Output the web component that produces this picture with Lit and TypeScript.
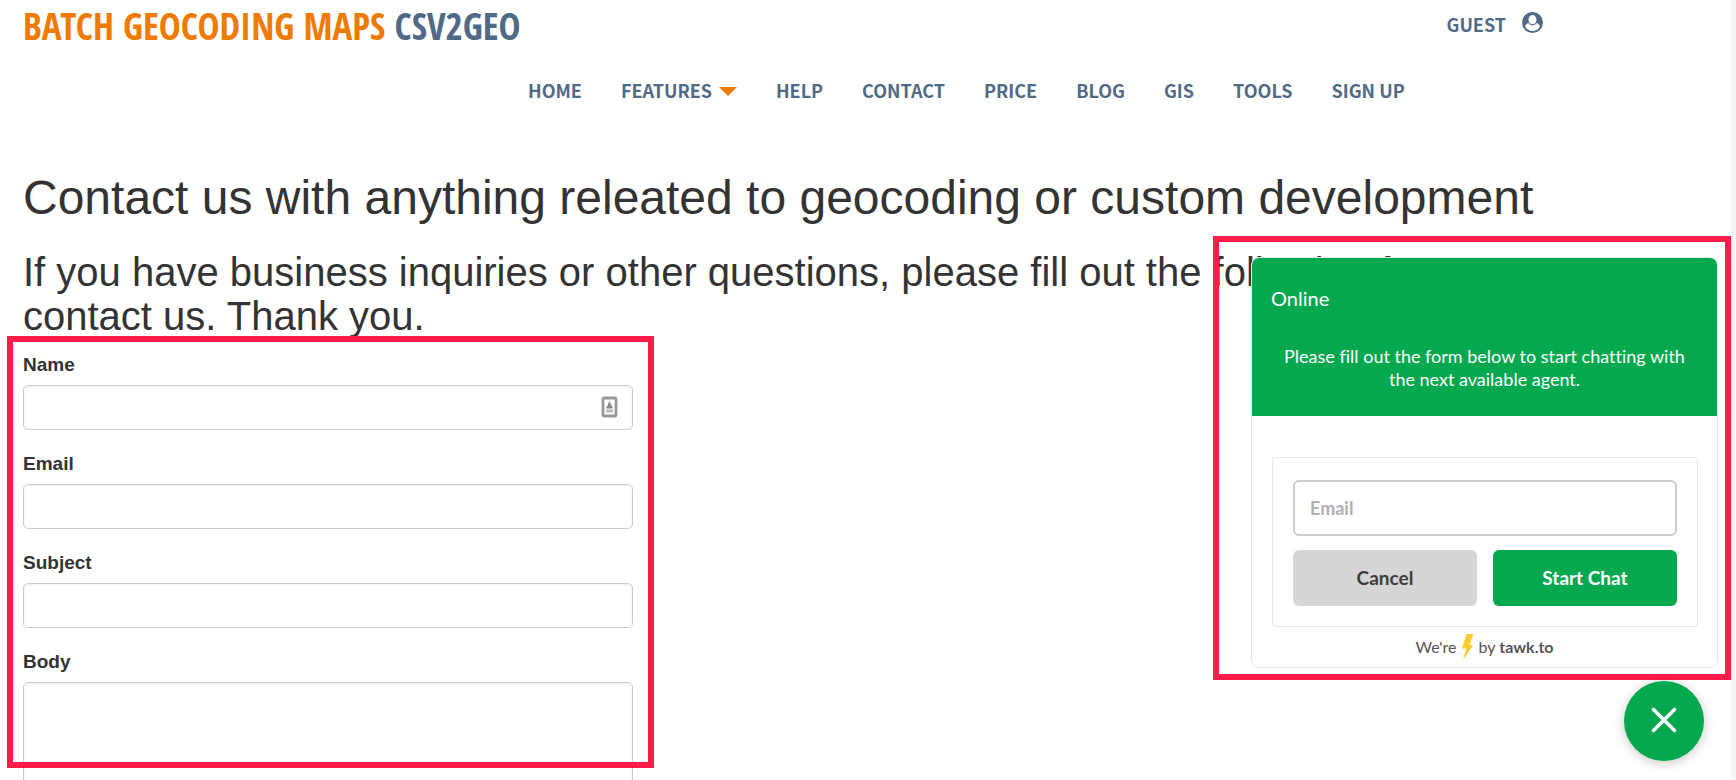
import { LitElement, html, css } from "lit";
import { customElement } from "lit/decorators.js";

@customElement("site-header")
class SiteHeader extends LitElement {
  static styles = css`
    :host {
      display: block;
      color: #506a85;
      font-family: "Noto Sans CJK SC", "Open Sans", sans-serif;
      font-size: 18px;
      font-weight: 700;
      line-height: 26px;
    }
    a {
      color: inherit;
      text-decoration: none;
    }
    .top {
      display: flex;
      justify-content: space-between;
      align-items: flex-start;
      padding: 0 188px 0 23px;
    }
    .logo {
      font-family: "Open Sans Condensed", "Roboto Condensed", "Noto Sans CJK SC", sans-serif;
      font-size: 37px;
      line-height: 52px;
      white-space: nowrap;
    }
    .accent {
      color: #ee7b00;
    }
    .guest {
      display: flex;
      align-items: center;
      gap: 16px;
      padding-top: 11px;
    }
    .guest svg {
      margin-bottom: 4px;
    }
    nav {
      display: flex;
      gap: 39px;
      padding: 25px 0 0 528px;
      white-space: nowrap;
    }
    .menu {
      display: flex;
      align-items: center;
      gap: 7px;
    }
    .menu svg {
      margin-top: 3px;
    }
  `;

  render() {
    return html`
      <header>
        <div class="top">
          <a class="logo" href="#"><span class="accent">BATCH GEOCODING MAPS</span> CSV2GEO</a>
          <a class="guest" href="#">
            GUEST
            <svg width="21" height="21" viewBox="0 0 21 21" aria-hidden="true">
              <circle cx="10.5" cy="10.5" r="10.5" fill="#506a85" />
              <path d="M6.4 11.1C4 12.1 3 13.700 3.300 15C5 17.600 7.600 19 10.500 19S16 17.600 17.700 15C18 13.700 17 12.100 14.600 11.100C13.500 12.700 12 13.500 10.500 13.500S7.500 12.700 6.400 11.100Z" fill="#fff" />
              <ellipse cx="10.5" cy="7.7" rx="4" ry="4.6" fill="#fff" />
            </svg>
          </a>
        </div>
        <nav aria-label="Main">
          <a href="#">HOME</a>
          <a class="menu" href="#">FEATURES
            <svg width="18" height="9" viewBox="0 0 18 9" aria-hidden="true"><path d="M0 0H18L9 9Z" fill="#ee7b00" /></svg>
          </a>
          ${["HELP", "CONTACT", "PRICE", "BLOG", "GIS", "TOOLS", "SIGN UP"].map(
            (t) => html`<a href="#">${t}</a>`
          )}
        </nav>
      </header>
    `;
  }
}

@customElement("contact-form")
class ContactForm extends LitElement {
  static styles = css`
    :host {
      display: block;
      position: relative;
      width: 610px;
    }
    form {
      display: flex;
      flex-direction: column;
      gap: 20px;
    }
    .field {
      display: flex;
      flex-direction: column;
      gap: 7px;
    }
    label {
      font-size: 19px;
      font-weight: 700;
      line-height: 27px;
    }
    .box {
      position: relative;
      display: flex;
    }
    input,
    textarea {
      flex: 1;
      box-sizing: border-box;
      height: 45px;
      margin: 0;
      padding: 8px 16px;
      border: 1px solid #ccc;
      border-radius: 5px;
      background: #fff;
      box-shadow: inset 0 1px 2px rgba(0, 0, 0, 0.08);
      font: inherit;
      outline: none;
      resize: none;
    }
    textarea {
      height: 200px;
    }
    .box svg {
      position: absolute;
      right: 15px;
      top: 11px;
    }
    .frame {
      position: absolute;
      inset: -15px -21px auto -16px;
      height: 420px;
      border: 6px solid #ff1c49;
      pointer-events: none;
    }
  `;

  render() {
    return html`
      <form>
        <div class="field">
          <label for="name">Name</label>
          <div class="box">
            <input id="name" type="text" />
            <svg width="17" height="22" viewBox="0 0 17 22" aria-hidden="true">
              <rect x="2" y="2" width="13" height="18" rx="1" fill="#fff" stroke="#999" stroke-width="2.8" />
              <path d="M8.500 5L10.200 8.500V10H11.500V12.500H5.500V10H6.800V8.500Z" fill="#888" />
              <rect x="5" y="13.500" width="7" height="3" fill="#bbb" />
            </svg>
          </div>
        </div>
        <div class="field">
          <label for="email">Email</label>
          <div class="box"><input id="email" type="email" /></div>
        </div>
        <div class="field">
          <label for="subject">Subject</label>
          <div class="box"><input id="subject" type="text" /></div>
        </div>
        <div class="field">
          <label for="body">Body</label>
          <div class="box"><textarea id="body"></textarea></div>
        </div>
      </form>
      <div class="frame"></div>
    `;
  }
}

@customElement("chat-widget")
class ChatWidget extends LitElement {
  static styles = css`
    :host {
      display: flex;
      flex-direction: column;
      align-items: flex-end;
      width: 518px;
      font-family: Lato, sans-serif;
      font-variant-ligatures: none;
    }
    .frame {
      box-sizing: border-box;
      width: 100%;
      padding: 15px 7px 6px 32px;
      border: 6px solid #ff1c49;
    }
    .panel {
      border: 1px solid #e6e6e6;
      border-radius: 8px;
      background: #fff;
      overflow: hidden;
    }
    .head {
      padding: 27px 19px 25px;
      background: #04a84e;
      color: #fff;
      font-size: 18px;
      line-height: 23px;
      text-align: center;
    }
    .status {
      margin: 0 0 33px;
      font-size: 20px;
      line-height: 27px;
      font-weight: 400;
      text-align: left;
    }
    .head p {
      margin: 0;
    }
    form {
      display: grid;
      grid-template-columns: 1fr 1fr;
      gap: 14px 16px;
      margin: 41px 19px 0 20px;
      padding: 22px 20px 20px;
      border: 1px solid #e6e6e6;
      border-radius: 4px;
    }
    input,
    button {
      box-sizing: border-box;
      height: 56px;
      margin: 0;
      border: 0;
      border-radius: 6px;
      font: 700 19px/24px Lato, sans-serif;
    }
    input {
      grid-column: 1 / -1;
      width: 100%;
      padding: 0 15px;
      border: 2px solid #ccc;
      background: #fff;
      font-size: 18px;
      outline: none;
    }
    input::placeholder {
      color: #b0b0b0;
      opacity: 1;
    }
    .cancel {
      background: #d6d6d6;
      color: #3d3d3d;
    }
    .start {
      background: #04a84e;
      color: #fff;
    }
    .credit {
      display: flex;
      justify-content: center;
      align-items: center;
      gap: 5px;
      height: 40px;
      color: #545454;
      font-size: 16px;
      line-height: 20px;
      text-decoration: none;
    }
    .close {
      display: grid;
      place-items: center;
      width: 80px;
      height: 80px;
      margin: 1px 27px 0 0;
      padding: 0 0 3px;
      border-radius: 50%;
      background: #04a84e;
      box-shadow: 0 2px 12px rgba(0, 0, 0, 0.22);
    }
  `;

  render() {
    return html`
      <div class="frame">
        <section class="panel" aria-label="Chat">
          <div class="head">
            <h3 class="status">Online</h3>
            <p>Please fill out the form below to start chatting with the next available agent.</p>
          </div>
          <form>
            <input type="email" placeholder="Email" aria-label="Email" />
            <button class="cancel" type="button">Cancel</button>
            <button class="start" type="button">Start Chat</button>
          </form>
          <a class="credit" href="#">
            <span>We're</span>
            <svg width="12" height="26" viewBox="0 0 12 26" aria-hidden="true">
              <path d="M4.500 0H11.500L7.500 11H11.200L1 26L4.300 14.500H0Z" fill="#ffcc2e" />
            </svg>
            <span>by <b>tawk.to</b></span>
          </a>
        </section>
      </div>
      <button class="close" type="button" aria-label="Close chat">
        <svg width="26" height="26" viewBox="0 0 26 26" aria-hidden="true">
          <path d="M2.500 2.500L23.500 23.500M23.500 2.500L2.500 23.500" stroke="#fff" stroke-width="3.600" stroke-linecap="round" />
        </svg>
      </button>
    `;
  }
}

@customElement("app-root")
class AppRoot extends LitElement {
  static styles = css`
    :host {
      display: block;
      position: relative;
      box-sizing: border-box;
      height: 100vh;
      overflow: hidden;
      border-right: 5px solid #f5f5f5;
      background: #fff;
      color: #333;
      font-family: "Liberation Sans", Arial, sans-serif;
    }
    main {
      padding: 68px 180px 0 23px;
    }
    h1,
    h2 {
      margin: 0;
      font-weight: 500;
    }
    h1 {
      font-size: 48px;
      line-height: 53px;
      margin-bottom: 26px;
    }
    h2 {
      font-size: 40px;
      line-height: 44px;
      margin-bottom: 13px;
    }
    .chat {
      position: absolute;
      right: 0;
      bottom: 19px;
    }
  `;

  render() {
    return html`
      <site-header></site-header>
      <main>
        <h1>Contact us with anything releated to geocoding or custom development</h1>
        <h2>
          If you have business inquiries or other questions, please fill out the following form to
          contact us. Thank you.
        </h2>
        <contact-form></contact-form>
      </main>
      <chat-widget class="chat"></chat-widget>
    `;
  }
}
